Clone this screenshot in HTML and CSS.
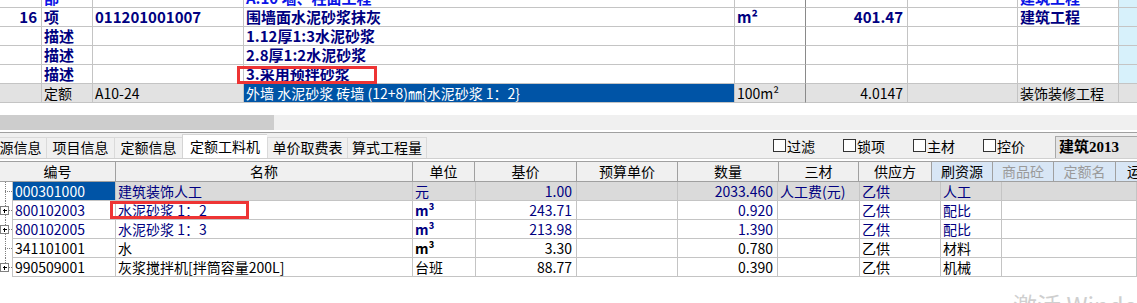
FILE: index.html
```html
<!DOCTYPE html>
<html lang="zh-CN">
<head>
<meta charset="utf-8">
<title>定额工料机</title>
<link rel="stylesheet" href="styles.css">
</head>
<body>
<div class="upper">
  <div class="trow tpart">
    <div class="tc"></div><div class="tc">部</div><div class="tc"></div><div class="tc">A.10 墙、柱面工程</div><div class="tc dk"></div><div class="tc"></div><div class="tc"></div><div class="tc">建筑工程</div><div class="tc side"></div>
  </div>
  <div class="trow tb">
    <div class="tc r">16</div><div class="tc">项</div><div class="tc">011201001007</div><div class="tc">围墙面水泥砂浆抹灰</div><div class="tc dk">m²</div><div class="tc r">401.47</div><div class="tc"></div><div class="tc">建筑工程</div><div class="tc side"></div>
  </div>
  <div class="trow tb">
    <div class="tc"></div><div class="tc">描述</div><div class="tc"></div><div class="tc">1.12厚1:3水泥砂浆</div><div class="tc dk"></div><div class="tc"></div><div class="tc"></div><div class="tc"></div><div class="tc side"></div>
  </div>
  <div class="trow tb">
    <div class="tc"></div><div class="tc">描述</div><div class="tc"></div><div class="tc">2.8厚1:2水泥砂浆</div><div class="tc dk"></div><div class="tc"></div><div class="tc"></div><div class="tc"></div><div class="tc side"></div>
  </div>
  <div class="trow tb">
    <div class="tc"></div><div class="tc">描述</div><div class="tc"></div><div class="tc">3.采用预拌砂浆</div><div class="tc dk"></div><div class="tc"></div><div class="tc"></div><div class="tc"></div><div class="tc side"></div>
  </div>
  <div class="trow tq">
    <div class="tc"></div><div class="tc">定额</div><div class="tc">A10-24</div><div class="tc sel">外墙 水泥砂浆 砖墙 (12+8)㎜{水泥砂浆 1：2}</div><div class="tc dk">100m²</div><div class="tc r">4.0147</div><div class="tc"></div><div class="tc">装饰装修工程</div><div class="tc side2"></div>
  </div>
</div>

<div class="hscroll"><div class="thumb"></div></div>

<div class="tabbar">
  <div class="tabs">
    <div class="tab w66">资源信息</div>
    <div class="tab w68">项目信息</div>
    <div class="tab w68">定额信息</div>
    <div class="tab w85 active">定额工料机</div>
    <div class="tab w80">单价取费表</div>
    <div class="tab w80">算式工程量</div>
  </div>
  <div class="opts">
    <div class="opt"><span class="cb"></span>过滤</div>
    <div class="opt"><span class="cb"></span>锁项</div>
    <div class="opt"><span class="cb"></span>主材</div>
    <div class="opt"><span class="cb"></span>控价</div>
    <div class="std">建筑2013</div>
  </div>
</div>

<div class="lower">
  <div class="lhdr">
    <div class="hc">编号</div><div class="hc">名称</div><div class="hc">单位</div><div class="hc">基价</div><div class="hc">预算单价</div><div class="hc">数量</div><div class="hc">三材</div><div class="hc">供应方</div><div class="hc hb">刷资源</div><div class="hc hb hg">商品砼</div><div class="hc hb hg">定额名</div><div class="hc hb hl">运</div>
  </div>

  <div class="lrow navy grey">
    <div class="tree"><svg width="13" height="19" viewBox="0 0 13 19"><path d="M5 0V19M5 9H12" stroke="#808080" stroke-dasharray="1 1" fill="none" shape-rendering="crispEdges"/></svg></div>
    <div class="lc code">000301000</div><div class="lc">建筑装饰人工</div><div class="lc">元</div><div class="lc r">1.00</div><div class="lc"></div><div class="lc r">2033.460</div><div class="lc">人工费(元)</div><div class="lc">乙供</div><div class="lc">人工</div><div class="lc"></div>
  </div>
  <div class="lrow navy">
    <div class="tree"><svg width="13" height="19" viewBox="0 0 13 19"><path d="M5 0V5M5 14V19M9 9H12" stroke="#808080" stroke-dasharray="1 1" fill="none" shape-rendering="crispEdges"/><rect x="0.5" y="5.5" width="8" height="8" fill="#fff" stroke="#808080" shape-rendering="crispEdges"/><path d="M2.5 9.5H6.5M4.5 7.5V11.5" stroke="#000" shape-rendering="crispEdges"/></svg></div>
    <div class="lc">800102003</div><div class="lc">水泥砂浆 1：2</div><div class="lc unit">m³</div><div class="lc r">243.71</div><div class="lc"></div><div class="lc r">0.920</div><div class="lc"></div><div class="lc">乙供</div><div class="lc">配比</div><div class="lc"></div>
  </div>
  <div class="lrow navy">
    <div class="tree"><svg width="13" height="19" viewBox="0 0 13 19"><path d="M5 0V5M5 14V19M9 9H12" stroke="#808080" stroke-dasharray="1 1" fill="none" shape-rendering="crispEdges"/><rect x="0.5" y="5.5" width="8" height="8" fill="#fff" stroke="#808080" shape-rendering="crispEdges"/><path d="M2.5 9.5H6.5M4.5 7.5V11.5" stroke="#000" shape-rendering="crispEdges"/></svg></div>
    <div class="lc">800102005</div><div class="lc">水泥砂浆 1：3</div><div class="lc unit">m³</div><div class="lc r">213.98</div><div class="lc"></div><div class="lc r">1.390</div><div class="lc"></div><div class="lc">乙供</div><div class="lc">配比</div><div class="lc"></div>
  </div>
  <div class="lrow">
    <div class="tree"><svg width="13" height="19" viewBox="0 0 13 19"><path d="M5 0V19M5 9H12" stroke="#808080" stroke-dasharray="1 1" fill="none" shape-rendering="crispEdges"/></svg></div>
    <div class="lc">341101001</div><div class="lc">水</div><div class="lc unit">m³</div><div class="lc r">3.30</div><div class="lc"></div><div class="lc r">0.780</div><div class="lc"></div><div class="lc">乙供</div><div class="lc">材料</div><div class="lc"></div>
  </div>
  <div class="lrow">
    <div class="tree"><svg width="13" height="19" viewBox="0 0 13 19"><path d="M5 0V5M9 9H12" stroke="#808080" stroke-dasharray="1 1" fill="none" shape-rendering="crispEdges"/><rect x="0.5" y="5.5" width="8" height="8" fill="#fff" stroke="#808080" shape-rendering="crispEdges"/><path d="M2.5 9.5H6.5M4.5 7.5V11.5" stroke="#000" shape-rendering="crispEdges"/></svg></div>
    <div class="lc">990509001</div><div class="lc">灰浆搅拌机[拌筒容量200L]</div><div class="lc">台班</div><div class="lc r">88.77</div><div class="lc"></div><div class="lc r">0.390</div><div class="lc"></div><div class="lc">乙供</div><div class="lc">机械</div><div class="lc"></div>
  </div>
</div>

<div class="redbox rb1"></div>
<div class="redbox rb2"></div>
<div class="watermark">激活 Windows</div>
</body>
</html>
```

FILE: styles.css
```css
* { box-sizing: border-box; }

html, body { margin: 0; padding: 0; }

body {
  width: 1137px;
  height: 303px;
  overflow: hidden;
  position: relative;
  background: #fff;
  font-family: "Noto Sans CJK SC", "Noto Sans", sans-serif;
  font-size: 14px;
  color: #000;
}

/* ---------- upper grid ---------- */
.upper {
  margin-top: -11px;
}

.trow {
  display: grid;
  grid-template-columns: 42px 51px 151px 491px 71px 102px 110px 101px 19px;
  height: 19px;
}

.tc {
  border-right: 1px solid #c4c4c4;
  border-bottom: 1px solid #c4c4c4;
  padding: 0 2px;
  line-height: 18px;
  white-space: nowrap;
  overflow: hidden;
}

.tc.r { text-align: right; padding-right: 4px; }
.tc.dk { border-right-color: #8a8a8a; }
.tc.side { background: #d7f1fb; }
.tc.side2 { background: #d2d6d8; }

.tb .tc, .tpart .tc {
  font-weight: bold;
  font-size: 15px;
  color: #000080;
}

.tpart .tc { color: #0a14e6; }

.tq .tc {
  background: #e2e2e2;
  font-size: 14px;
}

.tq .tc.sel {
  background: #0054a6;
  color: #fff;
}

/* ---------- scrollbar ---------- */
.hscroll {
  margin-top: 12px;
  height: 15px;
  background: #f0f0f0;
}

.thumb {
  width: 274px;
  height: 15px;
  background: #cdcdcd;
}

/* ---------- tab bar ---------- */
.tabbar {
  margin-top: 2px;
  height: 27px;
  display: flex;
  align-items: flex-end;
  background: #f0f0f0;
  border-top: 1px solid #a0a0a0;
  border-bottom: 1px solid #d0d0d0;
}

.tabs {
  display: flex;
  align-items: flex-end;
  margin-left: -20px;
}

.tab {
  height: 21px;
  line-height: 19px;
  text-align: center;
  border: 1px solid #dadada;
  border-bottom: none;
  border-right: none;
  background: #f0f0f0;
  white-space: nowrap;
}

.tab:last-child { border-right: 1px solid #dadada; }

.tab.active {
  height: 24px;
  line-height: 22px;
  background: #fff;
  border-color: #d4d4d4;
}

.w66 { width: 66px; }
.w68 { width: 68px; }
.w85 { width: 85px; }
.w80 { width: 80px; }

.opts {
  margin-left: auto;
  align-self: stretch;
  display: flex;
  align-items: center;
}

.opt {
  width: 70px;
  display: flex;
  align-items: center;
  line-height: 18px;
  white-space: nowrap;
}

.cb {
  width: 13px;
  height: 13px;
  border: 1px solid #333;
  background: #fff;
  margin-right: 1px;
}

.std {
  margin-left: 2px;
  width: 82px;
  height: 22px;
  align-self: flex-end;
  background: #e4e4e4;
  border-top: 1px solid #a8a8a8;
  border-left: 1px solid #a8a8a8;
  padding-left: 3px;
  line-height: 21px;
  font-family: "Liberation Serif", "Noto Sans CJK SC", serif;
  font-weight: bold;
  font-size: 15px;
  white-space: nowrap;
}

/* ---------- lower grid ---------- */
.lower {
  margin-top: 2px;
}

.lhdr {
  display: grid;
  grid-template-columns: 116px 297px 62px 102px 101px 101px 80px 73px 61px 61px 62px 60px;
  height: 21px;
  border-top: 1px solid #a0a0a0;
  background: #f0f0f0;
}

.hc {
  border-right: 1px solid #a0a0a0;
  border-bottom: 1px solid #a0a0a0;
  text-align: center;
  line-height: 19px;
  white-space: nowrap;
  overflow: hidden;
}

.hc.hb { background: #d8e6f5; }
.hc.hg { color: #9a9a9a; }
.hc.hl { text-align: left; padding-left: 11px; }

.lrow {
  display: grid;
  grid-template-columns: 13px 103px 297px 63px 101px 101px 100px 82px 81px 61px 135px;
  height: 19px;
}

.lrow.navy { color: #000080; }
.lrow.grey .lc { background: #dadada; }
.lrow.grey .lc.code { background: #0054a6; color: #fff; }

.tree {
  border-right: 1px solid #c4c4c4;
  height: 19px;
}

.tree svg { display: block; }

.lc {
  border-right: 1px solid #c4c4c4;
  border-bottom: 1px solid #c4c4c4;
  padding: 0 2px;
  line-height: 18px;
  white-space: nowrap;
  overflow: hidden;
}

.lc.r { text-align: right; padding-right: 4px; }
.lc.unit { font-weight: bold; }

/* ---------- overlays ---------- */
.redbox {
  position: absolute;
  border: 3px solid #ee3434;
}

.rb1 { left: 237px; top: 66px; width: 140px; height: 18px; }
.rb2 { left: 110px; top: 201px; width: 139px; height: 18px; }

.watermark {
  position: absolute;
  left: 1013px;
  top: 291px;
  height: 12px;
  overflow: hidden;
  font-size: 24px;
  line-height: 28px;
  color: #cfcfcf;
  white-space: nowrap;
}
```
